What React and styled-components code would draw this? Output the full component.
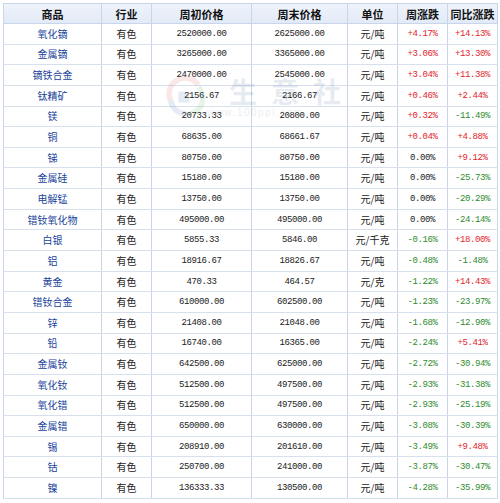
import React from "react";
import styled, { createGlobalStyle } from "styled-components";

const Global = createGlobalStyle`
  html, body { margin: 0; padding: 0; background: #ffffff; }
  body { font-family: "Noto Sans CJK SC", "Liberation Sans", sans-serif; }
`;

const Page = styled.div`
  position: relative;
  width: 500px;
  height: 503px;
  padding: 3px 3px 0 3px;
  box-sizing: border-box;
  background: #ffffff;
`;

const Table = styled.table`
  width: 494px;
  border-collapse: collapse;
  table-layout: fixed;
  border: 1px solid #c9d5ea;
`;

const HeadRow = styled.tr`
  height: 20px;
  background: linear-gradient(#eef3fb, #e2eaf7);
`;

const Th = styled.th`
  border: 1px solid #c9d5ea;
  font-family: "Noto Sans CJK SC", sans-serif;
  font-weight: 700;
  font-size: 11px;
  color: #111;
  text-align: center;
  padding: 0;
  line-height: 18px;
`;

const Row = styled.tr`
  height: 20.65px;
`;

const Td = styled.td`
  border: 1px solid #d8e0ee;
  border-left-color: #c9d5ea;
  border-right-color: #c9d5ea;
  padding: 0;
  text-align: center;
  font-size: 10px;
  line-height: 12px;
  white-space: nowrap;
  color: ${(p) => p.$color || "#222"};
  font-family: ${(p) =>
    p.$mono ? '"Liberation Mono", "DejaVu Sans Mono", monospace' : '"Noto Sans CJK SC", sans-serif'};
  ${(p) => (p.$mono ? "font-size: 9px; letter-spacing: -0.4px;" : "")}
`;

const Name = styled.span`
  color: #21439a;
`;

const Watermark = styled.div`
  position: absolute;
  left: 165px;
  top: 74px;
  pointer-events: none;
  opacity: 0.13;
  display: flex;
  align-items: center;
  gap: 24px;
  white-space: nowrap;
`;

const WmText = styled.div`
  display: flex;
  flex-direction: column;
  align-items: flex-start;
`;

const WmBig = styled.div`
  font-family: "Noto Sans CJK SC", sans-serif;
  font-size: 28px;
  font-weight: 700;
  letter-spacing: 14px;
  color: #4a6a9a;
  line-height: 32px;
`;

const WmSmall = styled.div`
  font-family: "Liberation Sans", sans-serif;
  font-size: 10px;
  color: #6a7a90;
  letter-spacing: 1.5px;
  margin-left: -22px;
`;

const cols = [98, 50, 100, 96, 50, 50, 50];
const heads = ["商品", "行业", "周初价格", "周末价格", "单位", "周涨跌", "同比涨跌"];

const rows = [
  ["氧化镝", "2520000.00", "2625000.00", "元/吨", "+4.17%", "+14.13%"],
  ["金属镝", "3265000.00", "3365000.00", "元/吨", "+3.06%", "+13.30%"],
  ["镝铁合金", "2470000.00", "2545000.00", "元/吨", "+3.04%", "+11.38%"],
  ["钛精矿", "2156.67", "2166.67", "元/吨", "+0.46%", "+2.44%"],
  ["镁", "20733.33", "20800.00", "元/吨", "+0.32%", "-11.49%"],
  ["铜", "68635.00", "68661.67", "元/吨", "+0.04%", "+4.88%"],
  ["锑", "80750.00", "80750.00", "元/吨", "0.00%", "+9.12%"],
  ["金属硅", "15180.00", "15180.00", "元/吨", "0.00%", "-25.73%"],
  ["电解锰", "13750.00", "13750.00", "元/吨", "0.00%", "-20.29%"],
  ["镨钕氧化物", "495000.00", "495000.00", "元/吨", "0.00%", "-24.14%"],
  ["白银", "5855.33", "5846.00", "元/千克", "-0.16%", "+18.00%"],
  ["铝", "18916.67", "18826.67", "元/吨", "-0.48%", "-1.48%"],
  ["黄金", "470.33", "464.57", "元/克", "-1.22%", "+14.43%"],
  ["镨钕合金", "610000.00", "602500.00", "元/吨", "-1.23%", "-23.97%"],
  ["锌", "21408.00", "21048.00", "元/吨", "-1.68%", "-12.90%"],
  ["铅", "16740.00", "16365.00", "元/吨", "-2.24%", "+5.41%"],
  ["金属钕", "642500.00", "625000.00", "元/吨", "-2.72%", "-30.94%"],
  ["氧化钕", "512500.00", "497500.00", "元/吨", "-2.93%", "-31.38%"],
  ["氧化镨", "512500.00", "497500.00", "元/吨", "-2.93%", "-25.19%"],
  ["金属镨", "650000.00", "630000.00", "元/吨", "-3.08%", "-30.39%"],
  ["锡", "208910.00", "201610.00", "元/吨", "-3.49%", "+9.48%"],
  ["钴", "250700.00", "241000.00", "元/吨", "-3.87%", "-30.47%"],
  ["镍", "136333.33", "130500.00", "元/吨", "-4.28%", "-35.99%"],
];

const pctColor = (v) => (v.startsWith("+") ? "#e2242b" : v.startsWith("-") ? "#2e8b2e" : "#222");

export default function App() {
  return (
    <Page>
      <Global />
      <Table>
        <colgroup>
          {cols.map((w, i) => (
            <col key={i} style={{ width: w }} />
          ))}
        </colgroup>
        <thead>
          <HeadRow>
            {heads.map((h) => (
              <Th key={h}>{h}</Th>
            ))}
          </HeadRow>
        </thead>
        <tbody>
          {rows.map((r) => (
            <Row key={r[0]}>
              <Td>
                <Name>{r[0]}</Name>
              </Td>
              <Td>有色</Td>
              <Td $mono>{r[1]}</Td>
              <Td $mono>{r[2]}</Td>
              <Td>{r[3]}</Td>
              <Td $mono $color={pctColor(r[4])}>{r[4]}</Td>
              <Td $mono $color={pctColor(r[5])}>{r[5]}</Td>
            </Row>
          ))}
        </tbody>
      </Table>
      <Watermark>
        <svg width="40" height="44" viewBox="0 0 36 40">
          <path d="M6 26 A14 14 0 0 1 30 10" stroke="#d9534f" strokeWidth="5" fill="none" />
          <path d="M30 12 A14 14 0 0 1 22 36" stroke="#4caf50" strokeWidth="5" fill="none" />
          <path d="M20 36 A14 14 0 0 1 5 24" stroke="#3f6fb5" strokeWidth="5" fill="none" />
          <rect x="12" y="16" width="10" height="10" fill="#3f6fb5" />
        </svg>
        <WmText>
          <WmBig>生意社</WmBig>
          <WmSmall>www.100ppi.com</WmSmall>
        </WmText>
      </Watermark>
    </Page>
  );
}
